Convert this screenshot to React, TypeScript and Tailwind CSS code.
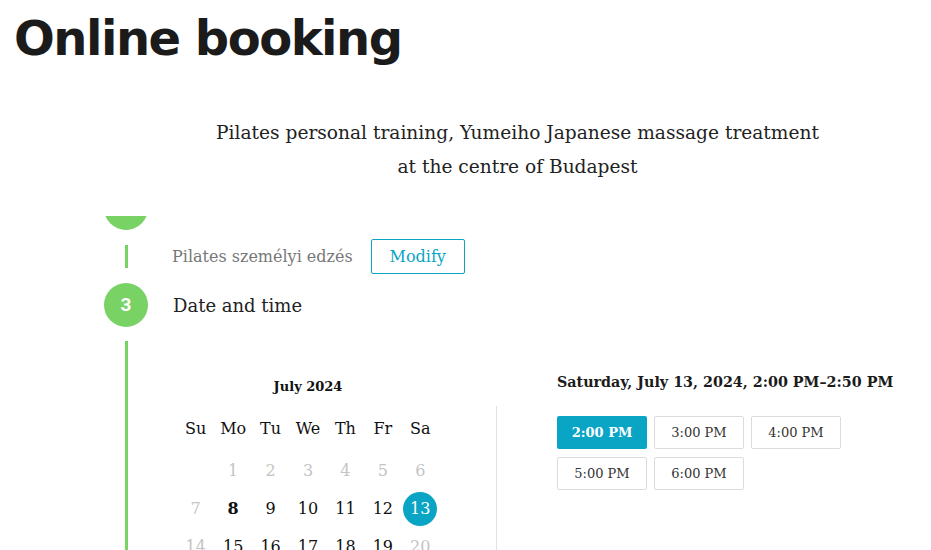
import React from 'react';

const slab = { fontFamily: '"DejaVu Serif", "Liberation Serif", serif' };

const weekDays = ['Su', 'Mo', 'Tu', 'We', 'Th', 'Fr', 'Sa'];

type Day = { n: number | null; kind: 'off' | 'on' | 'bold' | 'sel' };

const rows: Day[][] = [
  [
    { n: null, kind: 'off' },
    { n: 1, kind: 'off' },
    { n: 2, kind: 'off' },
    { n: 3, kind: 'off' },
    { n: 4, kind: 'off' },
    { n: 5, kind: 'off' },
    { n: 6, kind: 'off' },
  ],
  [
    { n: 7, kind: 'off' },
    { n: 8, kind: 'bold' },
    { n: 9, kind: 'on' },
    { n: 10, kind: 'on' },
    { n: 11, kind: 'on' },
    { n: 12, kind: 'on' },
    { n: 13, kind: 'sel' },
  ],
  [
    { n: 14, kind: 'off' },
    { n: 15, kind: 'on' },
    { n: 16, kind: 'on' },
    { n: 17, kind: 'on' },
    { n: 18, kind: 'on' },
    { n: 19, kind: 'on' },
    { n: 20, kind: 'off' },
  ],
];

const times = ['2:00 PM', '3:00 PM', '4:00 PM', '5:00 PM', '6:00 PM'];

const DayCell: React.FC<{ day: Day }> = ({ day }) => {
  if (day.n === null) return <div className="h-[38px]" />;
  if (day.kind === 'sel') {
    return (
      <div className="h-[38px] flex items-center justify-center">
        <span className="w-[34px] h-[34px] rounded-full bg-[#0aa5c5] text-white flex items-center justify-center text-[16px]">
          {day.n}
        </span>
      </div>
    );
  }
  const color =
    day.kind === 'off'
      ? 'text-[#c4c4c4]'
      : day.kind === 'bold'
      ? 'text-[#111] font-bold'
      : 'text-[#111]';
  return (
    <div className={`h-[38px] flex items-center justify-center text-[16px] ${color}`}>
      {day.n}
    </div>
  );
};

export default function App() {
  return (
    <div className="w-[931px] h-[550px] overflow-hidden bg-white">
      {/* Page title */}
      <h1
        className="pl-[14px] pt-[10px] text-[48px] leading-[56px] font-bold text-[#1b1b1b] tracking-[-1.5px]"
        style={{ fontFamily: '"DejaVu Sans", "Noto Sans", sans-serif' }}
      >
        Online booking
      </h1>

      <div className="pl-[104px]">
        {/* Subtitle */}
        <p
          className="mt-[50px] text-center text-[18.6px] leading-[34px] text-[#222]"
          style={slab}
        >
          Pilates personal training, Yumeiho Japanese massage treatment
          <br />
          at the centre of Budapest
        </p>

        {/* Steps */}
        <div className="mt-[32px]" style={slab}>
          {/* Previous step circle (scrolled off) */}
          <div className="h-[14px] w-[44px] overflow-hidden">
            <div className="w-[44px] h-[44px] rounded-full bg-[#78d264] -mt-[30px]" />
          </div>

          {/* Chosen service */}
          <div className="flex h-[53px]">
            <div className="w-[44px] flex justify-center items-center">
              <div className="w-[3px] h-[23px] bg-[#78d264]" />
            </div>
            <div className="ml-[24px] flex items-center gap-[18px]">
              <span className="text-[16px] text-[#777]">Pilates személyi edzés</span>
              <button className="w-[94px] h-[35px] border border-[#0aa5c5] rounded-[2px] text-[#0aa5c5] text-[16px]">
                Modify
              </button>
            </div>
          </div>

          {/* Step 3 header */}
          <div className="flex h-[44px] items-center">
            <div
              className="w-[44px] h-[44px] rounded-full bg-[#78d264] text-white flex items-center justify-center text-[19px] font-bold"
              style={{ fontFamily: 'Roboto, "Liberation Sans", sans-serif' }}
            >
              3
            </div>
            <span className="ml-[25px] text-[18px] text-[#222]">Date and time</span>
          </div>

          {/* Step 3 body */}
          <div className="flex h-[300px]">
            <div className="w-[44px] flex justify-center pt-[14px]">
              <div className="w-[3px] h-full bg-[#78d264]" />
            </div>

            <div className="ml-[24px] flex">
              {/* Calendar */}
              <div className="w-[325px]">
                <div className="mt-[50px] ml-[5px] w-[262px] text-center text-[13px] leading-[20px] font-bold text-[#111]">
                  July 2024
                </div>
                <div className="mt-[9px] pt-[4px] border-r border-[#dde3e6] h-[200px]">
                  <div className="ml-[5px] w-[262px] grid grid-cols-7">
                    {weekDays.map((d) => (
                      <div
                        key={d}
                        className="h-[38px] flex items-center justify-center text-[16px] text-[#111]"
                      >
                        {d}
                      </div>
                    ))}
                  </div>
                  <div className="ml-[5px] mt-[4px] w-[262px] grid grid-cols-7">
                    {rows.flat().map((day, i) => (
                      <DayCell key={i} day={day} />
                    ))}
                  </div>
                </div>
              </div>

              {/* Time slots */}
              <div className="pl-[60px]">
                <div className="mt-[43px] text-[14.3px] leading-[24px] font-bold text-[#1b1b1b] whitespace-nowrap">
                  Saturday, July 13, 2024, 2:00 PM–2:50 PM
                </div>
                <div className="mt-[22px] grid grid-cols-[90px_90px_90px] gap-x-[7px] gap-y-[8px]">
                  {times.map((t, i) => (
                    <button
                      key={t}
                      className={
                        i === 0
                          ? 'h-[33px] rounded-[2px] bg-[#0aa5c5] text-white text-[13px] font-bold'
                          : 'h-[33px] rounded-[2px] border border-[#dcdcdc] text-[#333] text-[13px]'
                      }
                    >
                      {t}
                    </button>
                  ))}
                </div>
              </div>
            </div>
          </div>
        </div>
      </div>
    </div>
  );
}
